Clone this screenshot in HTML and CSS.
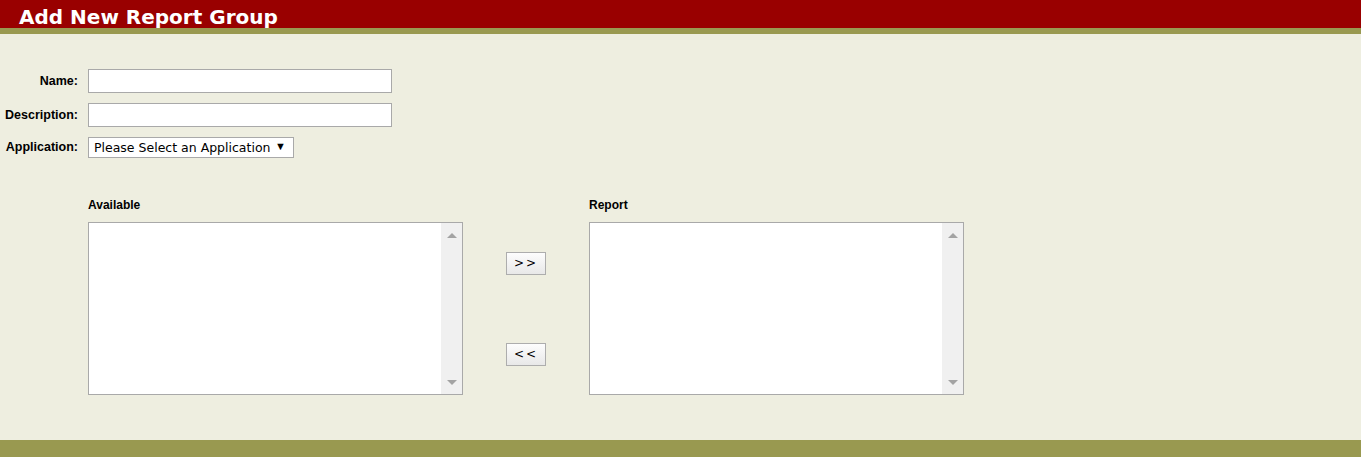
FILE: index.html
```html
<!DOCTYPE html>
<html lang="en">
<head>
  <meta charset="UTF-8">
  <title>Add New Report Group</title>
  <link rel="stylesheet" href="styles.css">
</head>
<body>
  <div class="header">
    <h1>Add New Report Group</h1>
  </div>

  <div class="content">
    <div class="form">
      <label for="name">Name:</label>
      <input type="text" id="name">
      <label for="description">Description:</label>
      <input type="text" id="description">
      <label for="application">Application:</label>
      <span class="select-wrap">
        <select id="application">
          <option>Please Select an Application</option>
        </select>
      </span>
    </div>

    <div class="lists">
      <div class="list-col">
        <h3>Available</h3>
        <div class="listbox">
          <div class="list-items"></div>
          <div class="scrollbar"><span class="arrow up"></span><span class="arrow down"></span></div>
        </div>
      </div>
      <div class="move-buttons">
        <button>&gt;&gt;</button>
        <button>&lt;&lt;</button>
      </div>
      <div class="list-col">
        <h3>Report</h3>
        <div class="listbox">
          <div class="list-items"></div>
          <div class="scrollbar"><span class="arrow up"></span><span class="arrow down"></span></div>
        </div>
      </div>
    </div>
  </div>

  <div class="footer"></div>
</body>
</html>
```

FILE: styles.css
```css
/* Page */
* { box-sizing: border-box; }
body { margin: 0; background: #eeeee0; font-family: "Liberation Sans", Arial, sans-serif; font-size: 12px; color: #000; min-height: 457px; display: flex; flex-direction: column; }

/* Header bar */
.header { background: #990000; height: 34px; border-bottom: 6px solid #999950; padding-left: 19px; }
.header h1 { margin: 0; font-family: "DejaVu Sans", Verdana, sans-serif; font-weight: bold; font-size: 20px; color: #fff; line-height: 28px; padding-top: 3px; }

/* Form fields */
.content { flex: 1; }
.form { display: grid; grid-template-columns: 78px auto; column-gap: 10px; row-gap: 10px; align-items: center; justify-content: start; margin-top: 35px; }
.form label { text-align: right; font-weight: bold; font-size: 12.5px; white-space: nowrap; }
.form label[for="application"] { margin-top: -2px; }
.form input { width: 304px; height: 24px; border: 1px solid #a9a9a9; background: #fff; margin: 0; padding: 2px 4px; font: 13px "DejaVu Sans", Verdana, sans-serif; }
.select-wrap { position: relative; display: inline-block; width: 206px; }
.select-wrap select { appearance: none; -webkit-appearance: none; width: 206px; height: 21px; border: 1px solid #a9a9a9; border-radius: 0; background: #fff; margin: 0; padding: 0 0 0 5px; font: 12.5px "DejaVu Sans", Verdana, sans-serif; color: #000; }
.select-wrap::after { content: "\25BC"; position: absolute; right: 8px; top: 3px; font-size: 11px; pointer-events: none; }

/* Available / Report lists */
.lists { display: flex; margin: 39px 0 0 88px; }
.list-col h3 { margin: 0 0 10px; padding-top: 1px; font-size: 12px; font-weight: bold; line-height: 14px; }
.listbox { display: flex; width: 375px; height: 173px; border: 1px solid #a9a9a9; background: #fff; }
.list-items { flex: 1; }
.scrollbar { width: 21px; background: #f0f0f0; display: flex; flex-direction: column; justify-content: space-between; align-items: center; padding: 10px 0 9px; }
.arrow { width: 0; height: 0; border-left: 5px solid transparent; border-right: 5px solid transparent; }
.arrow.up { border-bottom: 5px solid #a3a3a3; }
.arrow.down { border-top: 5px solid #a3a3a3; }
.move-buttons { display: flex; flex-direction: column; justify-content: center; gap: 68px; margin: 25px 43px 0; }
.move-buttons button { width: 40px; height: 23px; margin: 0; padding: 0; border: 1px solid #adadad; background: linear-gradient(#fdfdfd, #e8e8e8); font: 12px "DejaVu Sans", Verdana, sans-serif; letter-spacing: 2px; color: #000; cursor: pointer; }

/* Footer bar */
.footer { height: 17px; background: #999950; }
```
